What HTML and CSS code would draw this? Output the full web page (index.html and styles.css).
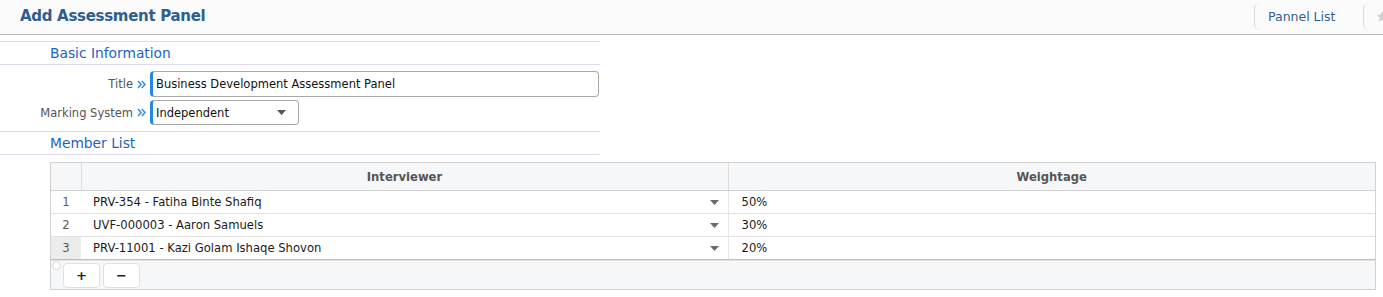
FILE: index.html
```html
<!DOCTYPE html>
<html lang="en">
<head>
    <meta charset="UTF-8">
    <meta name="viewport" content="width=device-width, initial-scale=1.0">
    <title>Add Assessment Panel</title>
    <link rel="stylesheet" href="styles.css">
</head>
<body>
    <header class="topbar">
        <h1 class="page-title">Add Assessment Panel</h1>
        <nav class="topbar-actions">
            <a class="topbar-btn" href="#">Pannel List</a>
            <a class="topbar-btn topbar-btn-icon" href="#">
                <svg width="13" height="13" viewBox="0 0 24 24"><path d="M12 1.5l3.2 6.9 7.3.8-5.5 5 1.6 7.3L12 17.8l-6.6 3.7 1.6-7.3-5.5-5 7.3-.8z" fill="#cfcfcf"/></svg>
            </a>
        </nav>
    </header>

    <main class="content">
        <section class="form-block">
            <h2 class="section-head">Basic Information</h2>
            <div class="form-rows">
                <div class="form-row">
                    <label class="form-label" for="title">Title</label>
                    <span class="req-mark"><svg width="9" height="9" viewBox="0 0 9 9"><path d="M1 1l3.2 3.5L1 8M4.8 1L8 4.5 4.8 8" fill="none" stroke="#2a8ae2" stroke-width="1.4"/></svg></span>
                    <input class="text-field" id="title" type="text" value="Business Development Assessment Panel">
                </div>
                <div class="form-row">
                    <label class="form-label">Marking System</label>
                    <span class="req-mark"><svg width="9" height="9" viewBox="0 0 9 9"><path d="M1 1l3.2 3.5L1 8M4.8 1L8 4.5 4.8 8" fill="none" stroke="#2a8ae2" stroke-width="1.4"/></svg></span>
                    <div class="select-field">
                        <span>Independent</span>
                        <svg width="9" height="5" viewBox="0 0 9 5"><path d="M0 0h9L4.5 5z" fill="#555"/></svg>
                    </div>
                </div>
            </div>
            <h2 class="section-head">Member List</h2>
        </section>

        <div class="grid-wrap">
            <table class="member-grid">
                <colgroup>
                    <col class="col-num">
                    <col class="col-name">
                    <col>
                </colgroup>
                <thead>
                    <tr>
                        <th></th>
                        <th>Interviewer</th>
                        <th>Weightage</th>
                    </tr>
                </thead>
                <tbody>
                    <tr>
                        <td class="row-num">1</td>
                        <td><div class="cell-select"><span>PRV-354 - Fatiha Binte Shafiq</span><svg width="9" height="5" viewBox="0 0 9 5"><path d="M0 0h9L4.5 5z" fill="#6b6b6b"/></svg></div></td>
                        <td class="weight">50%</td>
                    </tr>
                    <tr>
                        <td class="row-num">2</td>
                        <td><div class="cell-select"><span>UVF-000003 - Aaron Samuels</span><svg width="9" height="5" viewBox="0 0 9 5"><path d="M0 0h9L4.5 5z" fill="#6b6b6b"/></svg></div></td>
                        <td class="weight">30%</td>
                    </tr>
                    <tr class="last-row">
                        <td class="row-num row-num-active">3</td>
                        <td><div class="cell-select"><span>PRV-11001 - Kazi Golam Ishaqe Shovon</span><svg width="9" height="5" viewBox="0 0 9 5"><path d="M0 0h9L4.5 5z" fill="#6b6b6b"/></svg></div></td>
                        <td class="weight">20%</td>
                    </tr>
                </tbody>
            </table>
            <div class="grid-footer">
                <span class="grid-handle"></span>
                <button class="grid-btn">+</button>
                <button class="grid-btn">&minus;</button>
            </div>
        </div>
    </main>
</body>
</html>
```

FILE: styles.css
```css
body {
    margin: 0;
    background: #fff;
    font-family: "DejaVu Sans", Verdana, sans-serif;
    color: #222;
}

/* top bar */
.topbar {
    display: flex;
    justify-content: space-between;
    align-items: flex-start;
    height: 34px;
    background: #fbfbfb;
    border-bottom: 1px solid #b8b8b8;
    overflow: hidden;
}

.page-title {
    margin: 0;
    padding: 7px 0 0 20px;
    font-size: 15px;
    font-weight: bold;
    letter-spacing: -0.3px;
    color: #2e5d8f;
}

.topbar-actions {
    display: flex;
    margin-right: -22px;
    padding-top: 3px;
}

.topbar-btn {
    display: flex;
    align-items: center;
    height: 27px;
    box-sizing: border-box;
    border-left: 1px solid #dadada;
    border-radius: 6px;
    font-size: 12.5px;
    color: #2f5f94;
    text-decoration: none;
}

.topbar-btn:first-child {
    width: 109px;
    padding-left: 13px;
}

.topbar-btn-icon {
    width: 42px;
    padding-left: 12px;
}

/* form */
.content {
    padding-top: 6px;
}

.form-block {
    width: 600px;
}

.section-head {
    margin: 0;
    height: 22px;
    line-height: 22px;
    padding-left: 50px;
    border-top: 1px solid #dedbf0;
    border-bottom: 1px solid #dedbf0;
    font-size: 13.8px;
    font-weight: normal;
    color: #1c63c4;
}

.form-rows {
    display: flex;
    flex-direction: column;
    gap: 3px;
    padding: 6px 0 6px;
}

.form-row {
    display: grid;
    grid-template-columns: 133px 17px auto;
    align-items: center;
}

.form-label {
    text-align: right;
    font-size: 11.5px;
    color: #555;
}

.req-mark {
    display: flex;
    justify-content: center;
    padding-right: 1px;
}

.text-field,
.select-field {
    height: 26px;
    box-sizing: border-box;
    border: 1px solid #a9a9a9;
    border-left: 3px solid #2388e4;
    border-radius: 4px;
    padding: 0 4px 0 3px;
    font-family: "DejaVu Sans", Verdana, sans-serif;
    font-size: 11.5px;
    color: #111;
    background: #fff;
}

.text-field {
    width: 449px;
    outline: none;
}

.select-field {
    display: flex;
    justify-content: space-between;
    align-items: center;
    width: 149px;
    height: 25px;
    padding-right: 12px;
}

/* member grid */
.grid-wrap {
    position: relative;
    margin: 7px 0 0 50px;
    width: 1326px;
    border: 1px solid #d2d2d2;
    box-sizing: border-box;
}

.member-grid {
    width: 100%;
    border-collapse: collapse;
    table-layout: fixed;
    font-size: 11.6px;
}

.col-num {
    width: 30px;
}

.col-name {
    width: 647px;
}

.member-grid th {
    height: 27px;
    padding: 0;
    background: #f6f7f9;
    border-right: 1px solid #dcdcdc;
    border-bottom: 1px solid #d2d2d2;
    font-weight: bold;
    color: #555;
}

.member-grid th:last-child {
    border-right: none;
}

.member-grid td {
    height: 22px;
    padding: 0 9px 0 12px;
    border-bottom: 1px solid #e2e2e2;
    color: #1a1a1a;
}

.member-grid td.weight {
    padding-left: 13px;
    border-left: 1px solid #e6e6e6;
}

.member-grid td.row-num {
    padding: 0;
    text-align: center;
    color: #5a5a5a;
}

.member-grid td.row-num-active {
    background: #ececec;
}

.member-grid .last-row td {
    border-bottom: 1px solid #bcbcbc;
}

.cell-select {
    display: flex;
    justify-content: space-between;
    align-items: center;
}

.grid-footer {
    display: flex;
    gap: 3px;
    height: 29px;
    padding: 2px 0 0 12px;
    box-sizing: border-box;
    background: #f6f7f9;
    border-top: 1px solid #e4e4e4;
}

.grid-handle {
    position: absolute;
    left: 1px;
    bottom: 19px;
    width: 7px;
    height: 7px;
    border: 1px solid #d6d6d6;
    border-radius: 50%;
    background: #fff;
}

.grid-btn {
    width: 37px;
    height: 25px;
    padding: 0;
    background: #fff;
    border: 1px solid #e0e0e0;
    border-radius: 4px;
    font-family: "DejaVu Sans", Verdana, sans-serif;
    font-size: 13px;
    font-weight: bold;
    color: #222;
}
```
